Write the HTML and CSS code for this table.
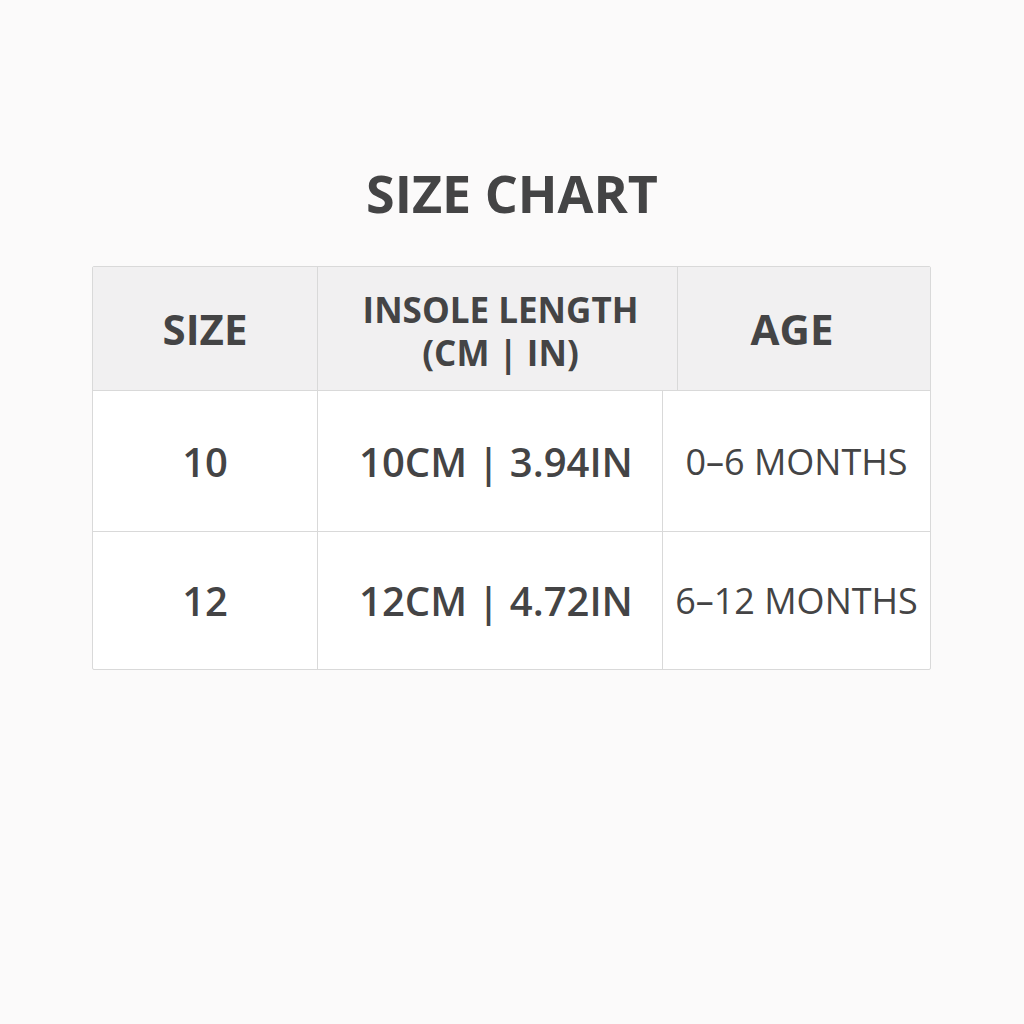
FILE: index.html
```html
<!DOCTYPE html>
<html>
<head>
<meta charset="utf-8">
<link rel="stylesheet" href="styles.css">
</head>
<body>
<div class="page">
  <h1 class="title">SIZE CHART</h1>
  <div class="chart">
    <div class="head">
      <div class="hcell">SIZE</div>
      <div class="hcell hcell-mid">INSOLE LENGTH<br>(CM | IN)</div>
      <div class="hcell hcell-age">AGE</div>
    </div>
    <div class="row">
      <div class="cell num">10</div>
      <div class="cell num cell-mid">10CM | 3.94IN</div>
      <div class="cell age">0–6 MONTHS</div>
    </div>
    <div class="row row-last">
      <div class="cell num">12</div>
      <div class="cell num cell-mid">12CM | 4.72IN</div>
      <div class="cell age">6–12 MONTHS</div>
    </div>
  </div>
</div>
</body>
</html>
```
FILE: styles.css
```css
html, body {
  margin: 0;
  padding: 0;
  background: #fbfafa;
}
body {
  font-family: "Open Sans", "Noto Sans", sans-serif;
  color: #444445;
}
.page {
  width: 1024px;
  height: 1024px;
  padding-top: 158px;
  box-sizing: border-box;
}
.title {
  margin: 0 0 38px 0;
  text-align: center;
  font-size: 52px;
  font-weight: 700;
  line-height: 70px;
}
.chart {
  width: 839px;
  margin-left: 92px;
  border: 1px solid #d9d9d9;
  border-radius: 2px;
  overflow: hidden;
  box-sizing: border-box;
  background: #ffffff;
}
.head {
  display: grid;
  grid-template-columns: 224px 361px 1fr;
  height: 123px;
  background: #f1f0f1;
  border-bottom: 1px solid #d9d9d9;
}
.hcell {
  display: flex;
  align-items: center;
  justify-content: center;
  text-align: center;
  font-weight: 700;
  font-size: 42px;
  line-height: 50px;
}
.hcell-mid {
  border-left: 1px solid #d9d9d9;
  border-right: 1px solid #d9d9d9;
  font-size: 35px;
  line-height: 43px;
  padding-left: 6px;
  padding-top: 5px;
}
.hcell-age {
  padding-right: 24px;
}
.row {
  display: grid;
  grid-template-columns: 224px 346px 1fr;
  height: 140px;
  border-bottom: 1px solid #d9d9d9;
}
.row-last {
  border-bottom: none;
  height: 137px;
}
.cell {
  display: flex;
  align-items: center;
  justify-content: center;
  text-align: center;
}
.cell-mid {
  border-left: 1px solid #d9d9d9;
  border-right: 1px solid #d9d9d9;
  padding-left: 12px;
}
.num {
  font-size: 40px;
  font-weight: 600;
}
.age {
  font-size: 36px;
  font-weight: 400;
}
```
